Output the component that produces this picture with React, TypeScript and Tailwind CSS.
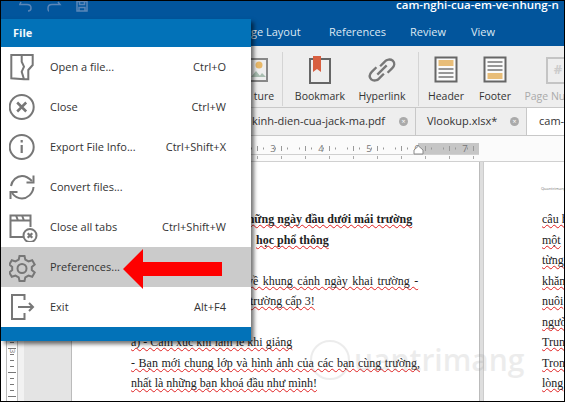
import * as React from 'react';

const menuItems = [
  { label: 'Open a file...', shortcut: 'Ctrl+O', icon: 'open' },
  { label: 'Close', shortcut: 'Ctrl+W', icon: 'close' },
  { label: 'Export File Info...', shortcut: 'Ctrl+Shift+X', icon: 'info' },
  { label: 'Convert files...', shortcut: '', icon: 'convert' },
  { label: 'Close all tabs', shortcut: 'Ctrl+Shift+W', icon: 'tabs' },
  { label: 'Preferences...', shortcut: '', icon: 'gear' },
  { label: 'Exit', shortcut: 'Alt+F4', icon: 'exit' },
];

const rightPageLines = ['câu h', 'một', 'từng', 'khăn', 'nuôi', 'ngườ', 'Trun', 'Tron', 'lòng'];

function MenuIcon({ name }: { name: string }) {
  const common = { fill: 'none', stroke: '#777', strokeWidth: 2 };
  return (
    <svg width="30" height="30" viewBox="0 0 30 30" className="shrink-0">
      {name === 'open' && (
        <path d="M2.300 3H23.700V13L19.300 18V27.300H15L2.300 26.300ZM12.700 3V9.700L15 14.700L12.700 19.700L15 27.300" {...common} />
      )}
      {name === 'close' && (
        <g {...common}>
          <circle cx="12.700" cy="15" r="12" />
          <path d="M8.200 10.500L17.200 19.500M17.200 10.500L8.200 19.500" strokeWidth="2.500" />
        </g>
      )}
      {name === 'info' && (
        <g {...common}>
          <circle cx="12.700" cy="15" r="12" />
          <path d="M12.700 13V21M12.700 8V10.500" strokeWidth="2.200" />
        </g>
      )}
      {name === 'convert' && (
        <g {...common}>
          <path d="M2 14C3 8 8 4 13 4C17 4 20 6 23 9" />
          <path d="M24.500 15C24 22 18 26.500 13 26.500C9 26.500 6 25 3 21" />
          <path d="M24.500 3.500V10.500H17.500" />
          <path d="M1.500 27V20H8.500" />
        </g>
      )}
      {name === 'tabs' && (
        <g {...common}>
          <path d="M14 25H1.500V3.500H21.500V15M1.500 8.500H21.500M7 3.500L9 8.500M13 3.500L15 8.500" />
          <circle cx="21" cy="23.500" r="6.500" fill="#fff" />
          <path d="M18.700 21.200L23.300 25.800M23.300 21.200L18.700 25.800" strokeWidth="2.200" />
        </g>
      )}
      {name === 'gear' && (
        <g {...common}>
          <path d="M10.500 4H15.500L16.300 7.600L19.500 9.400L23.200 8.200L25.700 12.500L22.800 15V18L25.700 20.500L23.200 24.800L19.500 23.600L16.300 25.400L15.500 29H10.500L9.700 25.400L6.500 23.600L2.800 24.800L0.300 20.500L3.200 18V15L0.300 12.500L2.800 8.200L6.500 9.400L9.700 7.600Z" />
          <circle cx="13" cy="16.500" r="4.500" />
        </g>
      )}
      {name === 'exit' && (
        <g {...common}>
          <path d="M15.500 8V3H3V27H15.500V21" />
          <path d="M9 15H23.500M20 11L24 15L20 19" />
        </g>
      )}
    </svg>
  );
}

function FileMenu() {
  return (
    <div className="absolute left-0 top-[18px] w-[250px] bg-[#0272b8] shadow-[3px_3px_4px_rgba(0,0,0,0.55)]">
      <div className="h-[28px] flex items-center pl-[12px] text-[11px] font-bold text-[#f4f8fb]">File</div>
      <div className="bg-white">
        {menuItems.map((item) => (
          <div
            key={item.label}
            className={`h-[40px] flex items-center pl-[8px] pr-[25px] text-[11px] text-[#333] ${
              item.icon === 'gear' ? 'bg-[#cbcbcb]' : ''
            }`}
          >
            <MenuIcon name={item.icon} />
            <span className="ml-[11px] flex-1">{item.label}</span>
            <span>{item.shortcut}</span>
          </div>
        ))}
      </div>
      <div className="h-[14px]" />
    </div>
  );
}

function RedArrow() {
  return (
    <svg width="100" height="42" viewBox="0 0 100 42" className="absolute left-[122px] top-[247px]">
      <polygon points="0,21 20,1 20,14 99,14 99,28 20,28 20,41" fill="#fe0000" />
    </svg>
  );
}

function RibbonTool({ label, width, className, children, muted }: { label: string; width: string; className: string; children: React.ReactNode; muted?: boolean }) {
  return (
    <div className={`flex flex-col items-center shrink-0 ${width} ${className}`}>
      <div className="h-[28px] flex items-center justify-center">{children}</div>
      <span className={`mt-[4px] leading-[16px] text-[10.500px] whitespace-nowrap ${muted ? 'text-[#aaa]' : 'text-[#333]'}`}>
        {label}
      </span>
    </div>
  );
}

function DocLine({ children, bold, className = '' }: { children?: React.ReactNode; bold?: boolean; className?: string }) {
  return (
    <p className={`h-[20.500px] leading-[20.500px] whitespace-nowrap text-[#222] underline decoration-wavy decoration-[#e02020] decoration-1 underline-offset-1 [text-decoration-skip-ink:none] ${bold ? 'font-bold' : ''} ${className}`}>
      {children}
    </p>
  );
}

function CloseDot() {
  return <span className="w-[9px] h-[9px] rounded-full bg-[#aaa] text-white text-[7px] leading-[9px] text-center shrink-0">×</span>;
}

function RulerDrawing() {
  const dots: number[] = [];
  for (let x = 250; x < 478; x += 6) dots.push(x);
  return (
    <svg width="563" height="26" viewBox="0 0 563 26" className="block">
      <rect x="417" y="7" width="61" height="11" fill="#c6c6c6" />
      <path d="M250 18.500H478" stroke="#d0d0d0" />
      {dots.map((x, i) => (
        <path key={x} d={i % 4 === 1 ? `M${x + 0.5} 10V15` : `M${x + 0.5} 11.500V13.500`} stroke={i % 4 === 3 ? 'none' : '#999'} />
      ))}
      {dots.filter((_, i) => i % 4 === 1).map((x) => (
        <path key={x} d={`M${x + 0.5} 20V23`} stroke="#aaa" />
      ))}
      {['3', '4', '5', '6', '7'].map((n, i) => (
        <text key={n} x={272 + i * 48} y="16" textAnchor="middle" fontSize="9.500" fill="#777">{n}</text>
      ))}
      <polygon points="417.500,10 422,14 422,18 413,18 413,14" fill="#fff" stroke="#888" />
    </svg>
  );
}

function VerticalRuler() {
  const ticks: number[] = [];
  for (let y = 150; y < 240; y += 6) ticks.push(y);
  return (
    <div className="relative w-[12px] bg-white border-x border-[#bbb]">
      <svg width="10" height="239" viewBox="0 0 10 239" className="block">
        {ticks.map((y, i) => (
          <path key={y} d={i % 4 === 2 ? `M1 ${y + 0.5}H9` : `M3 ${y + 0.5}H7`} stroke="#777" />
        ))}
      </svg>
      <span className="absolute left-px top-[184px] w-[10px] text-center text-[8px] leading-[10px] text-[#777] rotate-90">3</span>
    </div>
  );
}

export default function App() {
  return (
    <div className="relative w-[565px] h-[402px] overflow-hidden bg-[#eeeeee] border border-black font-['Open_Sans','Liberation_Sans',sans-serif]">
      {/* title bar */}
      <div className="h-[45px] bg-[#02559c] text-white">
        <div className="relative h-[18px] overflow-hidden">
          <svg width="80" height="11" viewBox="0 0 80 11" className="absolute left-[18px] top-0" fill="none" stroke="#5a86b8" strokeWidth="1.500">
            <path d="M2 1L0.800 3.500H8C11 3.500 12 5.500 12 7C12 8.500 11 10 9 10" />
            <path d="M39 1L41 3.500H33C30 3.500 29 5.500 29 7C29 8.500 29.500 10 30 10" />
            <path d="M58 0.500H68V10H58ZM60.500 0.500V3.500H65.500V0.500M60 10V6.500H66V10" />
          </svg>
          <span className="absolute left-[395px] -top-[2px] text-[11.500px] font-semibold leading-[12px] whitespace-nowrap">
            cam-nghi-cua-em-ve-nhung-n
          </span>
        </div>
        <div className="h-[27px] flex items-center pl-[250px] text-[11px] text-[#dce8f3]">
          <span className="w-[78px]">ge Layout</span>
          <span className="w-[81px]">References</span>
          <span className="w-[61px]">Review</span>
          <span>View</span>
        </div>
      </div>

      {/* ribbon */}
      <div className="h-[62px] bg-[#eeeeee] border-b border-[#c8c8c8] flex items-start pt-[10px] pl-[250px]">
        <RibbonTool label="ture" width="w-[26px]" className="">
          <svg width="26" height="28" viewBox="0 0 26 28">
            <path d="M0 3H16V25H0" fill="none" stroke="#888" strokeWidth="2" />
            <circle cx="8" cy="9" r="3.500" fill="#e8b868" />
            <path d="M0 21L5 15L10 21ZM8 21L11 17L15 21Z" fill="#a8bdb0" />
          </svg>
        </RibbonTool>
        <div className="w-px h-[54px] -mt-[4px] bg-[#d4d4d4] ml-[5px] shrink-0" />
        <RibbonTool label="Bookmark" width="w-[52px]" className="ml-[11px]">
          <svg width="24" height="28" viewBox="0 0 24 28">
            <rect x="2" y="3" width="20" height="24" fill="none" stroke="#666" strokeWidth="2" />
            <path d="M5 0H13V16L9 13L5 16Z" fill="#d85f40" />
          </svg>
        </RibbonTool>
        <RibbonTool label="Hyperlink" width="w-[50px]" className="ml-[11px]">
          <svg width="28" height="28" viewBox="0 0 30 30" fill="none" stroke="#777" strokeWidth="2.500">
            <path d="M13 11L18 6C20 3.500 24 3 26.500 5C29 7.500 28.500 10.500 26 13L21 18" />
            <path d="M17 19L12 24C10 26.500 6 27 3.500 25C1 22.500 1.500 19.500 4 17L9 12" />
            <path d="M10 20L20 10" />
          </svg>
        </RibbonTool>
        <div className="w-px h-[54px] -mt-[4px] bg-[#d4d4d4] ml-[11px] shrink-0" />
        <RibbonTool label="Header" width="w-[38px]" className="ml-[8px]">
          <svg width="24" height="28" viewBox="0 0 24 28">
            <rect x="1.500" y="1.500" width="21" height="24" fill="#fafafa" stroke="#666" strokeWidth="2" />
            <rect x="4.500" y="4" width="15" height="6" fill="#e8bd78" />
            <path d="M4.500 13H19.500M4.500 17H19.500M4.500 21H19.500" stroke="#777" strokeWidth="1.500" />
          </svg>
        </RibbonTool>
        <RibbonTool label="Footer" width="w-[34px]" className="ml-[13px]">
          <svg width="24" height="28" viewBox="0 0 24 28">
            <rect x="1.500" y="1.500" width="21" height="24" fill="#fafafa" stroke="#666" strokeWidth="2" />
            <path d="M4.500 6H19.500M4.500 10H19.500M4.500 14H19.500" stroke="#777" strokeWidth="1.500" />
            <rect x="4.500" y="17" width="15" height="6" fill="#e8bd78" />
          </svg>
        </RibbonTool>
        <RibbonTool label="Page Number" width="w-[66px]" className="ml-[13px]" muted>
          <div className="w-[24px] h-[27px] border-2 border-[#c4c4c4] flex items-center justify-center text-[13px] font-bold text-[#ccc]">
            #
          </div>
        </RibbonTool>
      </div>

      {/* tabs */}
      <div className="h-[28px] flex items-stretch text-[11px] text-[#333] border-b border-[#c8c8c8]">
        <div className="w-[415px] flex items-center pr-[7px] border-r border-[#c8c8c8]">
          <span className="flex-1 pl-[251px] whitespace-nowrap overflow-hidden">kinh-dien-cua-jack-ma.pdf</span>
          <CloseDot />
        </div>
        <div className="w-[111px] flex items-center pl-[11px] pr-[7px] border-r border-[#c8c8c8]">
          <span className="flex-1">Vlookup.xlsx*</span>
          <CloseDot />
        </div>
        <div className="flex-1 bg-white flex items-center pl-[12px] whitespace-nowrap overflow-hidden">cam-nghi</div>
      </div>

      {/* ruler */}
      <div className="h-[26px] bg-[#fbfbfb] border-b border-[#d0d0d0] overflow-hidden">
        <RulerDrawing />
      </div>

      {/* document area */}
      <div className="relative flex h-[239px]">
        <div className="w-[5px] bg-white" />
        <VerticalRuler />
        <div className="w-[6px] bg-[#f2f2f2]" />
        <div className="w-[47px] bg-[#e4e4e4]" />
        <div className="w-[409px] bg-white border-x border-[#bbb] pl-[59px] pt-[47px] text-[12px] font-['Liberation_Serif',serif] overflow-hidden">
          <DocLine bold className="pl-[110px]">những ngày đầu dưới mái trường</DocLine>
          <DocLine bold className="pl-[125px]">học phổ thông</DocLine>
          <DocLine className="no-underline" />
          <DocLine className="pl-[116px] [word-spacing:1.500px]">về khung cảnh ngày khai trường -</DocLine>
          <DocLine className="pl-[119px]">trường cấp 3!</DocLine>
          <DocLine className="no-underline" />
          <DocLine>a) - Cảm xúc khi làm lễ khi giảng</DocLine>
          <DocLine className="[word-spacing:0.600px]">- Bạn mới chung lớp và hình ảnh của các bạn cùng trường,</DocLine>
          <DocLine>nhất là những bạn khoá đầu như mình!</DocLine>
        </div>
        <div className="w-[3px] bg-[#dedede]" />
        <div className="flex-1 bg-white border-l border-[#ccc] pl-[58px] pt-[47px] text-[12px] font-['Liberation_Serif',serif] overflow-hidden">
          {rightPageLines.map((t) => (
            <DocLine key={t}>{t}</DocLine>
          ))}
        </div>
        <span className="absolute left-[540px] top-[24px] text-[4px] text-[#777] whitespace-nowrap">Quantrimang</span>
        {/* watermark */}
        <div className="absolute left-[309px] top-[178px] flex items-center opacity-15 text-[#888]">
          <div className="w-[40px] h-[40px] rounded-full border-2 border-[#888]" />
          <span className="ml-[4px] text-[30px] leading-[40px] font-semibold whitespace-nowrap">uantrimang</span>
        </div>
      </div>

      <FileMenu />
      <RedArrow />
    </div>
  );
}
